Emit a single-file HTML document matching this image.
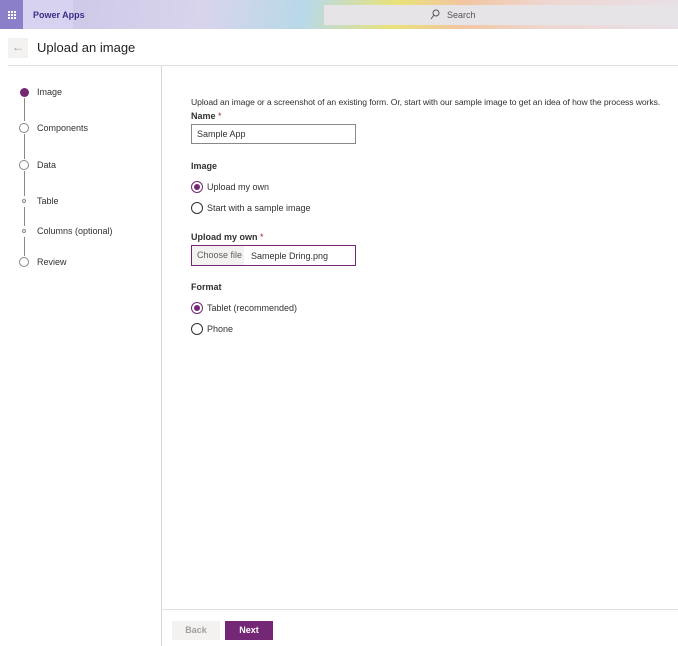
<!DOCTYPE html>
<html><head><style>
*{margin:0;padding:0;box-sizing:border-box}
body{width:678px;height:646px;background:#fff;font-family:"Liberation Sans",sans-serif;color:#323130;position:relative;overflow:hidden;font-size:9px}
.a{position:absolute}
.hdr{left:0;top:0;width:678px;height:29px;background:linear-gradient(100deg,#c9c3e6 0%,#d8d4ec 30%,#b8d9e8 45%,#e9e27a 58%,#f2c5a0 68%,#eed6d0 80%,#e8e0e8 100%)}
.radio{width:12px;height:12px;border:1px solid #323130;border-radius:50%}
.radio.on{border-color:#742774}
.radio.on::after{content:"";position:absolute;left:2px;top:2px;width:6px;height:6px;border-radius:50%;background:#742774}
.sc{border:1px solid #8a8886;border-radius:50%;background:#fff}
.vl{width:1px;background:#8a8886}
.lbl{font-weight:bold;font-size:9px}
</style></head><body>
<div class="a hdr"></div>
<div class="a" style="left:0;top:0;width:23px;height:29px;background:#8a7fc8"></div>
<svg class="a" style="left:8px;top:11px" width="8" height="8"><g fill="#fff"><rect x="0" y="0" width="2" height="2"/><rect x="3" y="0" width="2" height="2"/><rect x="6" y="0" width="2" height="2"/><rect x="0" y="3" width="2" height="2"/><rect x="3" y="3" width="2" height="2"/><rect x="6" y="3" width="2" height="2"/><rect x="0" y="6" width="2" height="2"/><rect x="3" y="6" width="2" height="2"/><rect x="6" y="6" width="2" height="2"/></g></svg>
<div class="a" style="left:23px;top:0;width:50px;height:29px;background:#d6d2ef"></div>
<div class="a" style="left:33px;top:10px;font-size:9px;color:#3b2d86;font-weight:bold">Power Apps</div>
<div class="a" style="left:324px;top:5px;width:354px;height:20px;background:#e6e4e6"></div>
<svg class="a" style="left:430px;top:9px" width="10" height="11"><circle cx="6" cy="4" r="3" fill="none" stroke="#555" stroke-width="1"/><line x1="4" y1="6" x2="1" y2="10" stroke="#555"/></svg>
<div class="a" style="left:447px;top:10px;font-size:9px;color:#555">Search</div>
<div class="a" style="left:8px;top:38px;width:20px;height:20px;background:#f3f2f1"></div>
<div class="a" style="left:12px;top:40px;font-size:12px;color:#a19f9d">←</div>
<div class="a" style="left:37px;top:40px;font-size:13px;color:#201f1e">Upload an image</div>
<div class="a" style="left:8px;top:65px;width:670px;height:1px;background:#e1dfdd"></div>
<div class="a" style="left:161px;top:66px;width:1px;height:580px;background:#d6d6d6"></div>
<div class="a" style="left:161px;top:609px;width:517px;height:1px;background:#e1dfdd"></div>
<div class="a" style="left:20px;top:88px;width:9px;height:9px;border-radius:50%;background:#742774"></div>
<div class="a vl" style="left:24px;top:98px;height:23px"></div>
<div class="a sc" style="left:19px;top:123px;width:10px;height:10px"></div>
<div class="a vl" style="left:24px;top:134px;height:25px"></div>
<div class="a sc" style="left:19px;top:160px;width:10px;height:10px"></div>
<div class="a vl" style="left:24px;top:171px;height:25px"></div>
<div class="a sc" style="left:22px;top:199px;width:4px;height:4px"></div>
<div class="a vl" style="left:24px;top:207px;height:19px"></div>
<div class="a sc" style="left:22px;top:229px;width:4px;height:4px"></div>
<div class="a vl" style="left:24px;top:237px;height:19px"></div>
<div class="a sc" style="left:19px;top:257px;width:10px;height:10px"></div>
<div class="a" style="left:37px;top:87px">Image</div>
<div class="a" style="left:37px;top:123px">Components</div>
<div class="a" style="left:37px;top:160px">Data</div>
<div class="a" style="left:37px;top:196px">Table</div>
<div class="a" style="left:37px;top:226px">Columns (optional)</div>
<div class="a" style="left:37px;top:257px">Review</div>
<div class="a" style="left:191px;top:97px;white-space:nowrap;font-size:8.6px;letter-spacing:-0.08px">Upload an image or a screenshot of an existing form. Or, start with our sample image to get an idea of how the process works.</div>
<div class="a lbl" style="left:191px;top:111px">Name <span style="color:#a4262c;font-weight:normal">*</span></div>
<div class="a" style="left:191px;top:124px;width:165px;height:20px;border:1px solid #8a8886"></div>
<div class="a" style="left:197px;top:129px">Sample App</div>
<div class="a lbl" style="left:191px;top:161px">Image</div>
<div class="a radio on" style="left:191px;top:181px"></div>
<div class="a" style="left:207px;top:182px">Upload my own</div>
<div class="a radio" style="left:191px;top:202px"></div>
<div class="a" style="left:207px;top:203px">Start with a sample image</div>
<div class="a lbl" style="left:191px;top:232px">Upload my own <span style="color:#a4262c;font-weight:normal">*</span></div>
<div class="a" style="left:191px;top:245px;width:165px;height:21px;border:1px solid #742774"></div>
<div class="a" style="left:192px;top:246px;width:52px;height:19px;background:#f3f2f1"></div>
<div class="a" style="left:197px;top:250px;color:#605e5c">Choose file</div>
<div class="a" style="left:251px;top:251px">Sameple Dring.png</div>
<div class="a lbl" style="left:191px;top:282px">Format</div>
<div class="a radio on" style="left:191px;top:302px"></div>
<div class="a" style="left:207px;top:303px">Tablet (recommended)</div>
<div class="a radio" style="left:191px;top:323px"></div>
<div class="a" style="left:207px;top:324px">Phone</div>
<div class="a" style="left:172px;top:621px;width:48px;height:19px;background:#f3f2f1;color:#a19f9d;text-align:center;line-height:19px;font-weight:bold">Back</div>
<div class="a" style="left:225px;top:621px;width:48px;height:19px;background:#742774;color:#fff;text-align:center;line-height:19px;font-weight:bold">Next</div>
</body></html>
